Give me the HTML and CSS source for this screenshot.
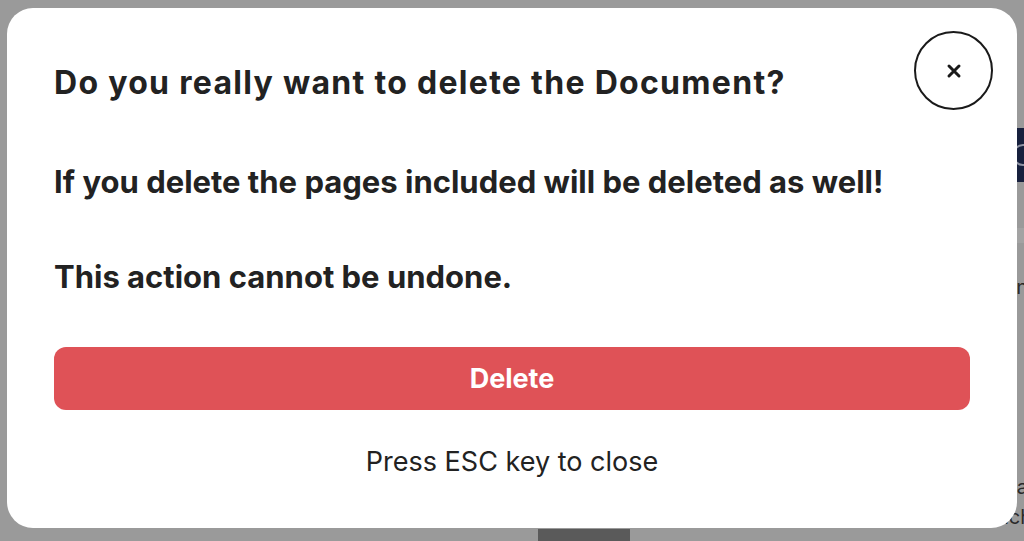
FILE: index.html
```html
<!DOCTYPE html>
<html lang="en">
<head>
    <meta charset="UTF-8">
    <meta name="viewport" content="width=device-width, initial-scale=1.0">
    <title>Delete Document</title>
    <link rel="stylesheet" href="styles.css">
</head>
<body>

    <!-- Page behind the overlay -->
    <div class="page">
        <div class="page-nav"><span class="nav-icon"></span></div>
        <div class="page-band"></div>
        <p class="page-text">n</p>
        <p class="page-text low">a</p>
        <p class="page-text lower">ich</p>
        <div class="page-footer"><span class="footer-block"></span></div>
    </div>

    <!-- Delete confirmation modal -->
    <div class="overlay">
        <div class="modal">
            <button class="close-btn" aria-label="Close">
                <svg width="16" height="16" viewBox="0 0 16 16">
                    <path d="M3 3 L13 13 M13 3 L3 13" stroke="#1a1a1a" stroke-width="3" stroke-linecap="round"/>
                </svg>
            </button>
            <h1>Do you really want to delete the Document?</h1>
            <p class="warning">If you delete the pages included will be deleted as well!</p>
            <p class="warning">This action cannot be undone.</p>
            <button class="delete-btn">Delete</button>
            <p class="hint">Press ESC key to close</p>
        </div>
    </div>

</body>
</html>
```

FILE: styles.css
```css
/* Base styling */
body {
    margin: 0;
    font-family: Inter, "Noto Sans", sans-serif;
    background-color: #9a9a9a;
    color: #222;
    overflow: hidden;
}

/* Page behind the overlay */
.page {
    height: 541px;
    display: flex;
    flex-direction: column;
    align-items: flex-end;
}

.page-nav {
    margin-top: 128px;
    width: 60px;
    height: 54px;
    background-color: #17203d;
    display: flex;
    justify-content: flex-end;
    align-items: center;
}

.nav-icon {
    width: 18px;
    height: 18px;
    border: 2px solid #8f93a3;
    border-radius: 50%;
    margin-right: -10px;
}

.page-band {
    margin-top: 46px;
    width: 60px;
    height: 15px;
    background-color: #a3a3a3;
}

.page-text {
    margin: 32px -4px 0 0;
    font-size: 20px;
    line-height: 24px;
    color: #2a2a2a;
}

.page-text.low {
    margin-top: 176px;
}

.page-text.lower {
    margin-top: 6px;
    margin-right: -8px;
}

.page-footer {
    margin-top: auto;
    width: 100%;
    height: 12px;
    display: flex;
}

.footer-block {
    margin-left: 538px;
    width: 92px;
    background-color: #5a5a5a;
}

/* Modal */
.overlay {
    position: fixed;
    inset: 0;
    padding: 8px 7px 13px 7px;
    display: flex;
}

.modal {
    position: relative;
    flex: 1;
    background-color: #fff;
    border-radius: 26px;
    padding: 55px 47px 0 47px;
    display: flex;
    flex-direction: column;
}

.close-btn {
    position: absolute;
    top: 23px;
    right: 24px;
    width: 79px;
    height: 79px;
    border: 2.5px solid #1a1a1a;
    border-radius: 50%;
    background: #fff;
    display: flex;
    align-items: center;
    justify-content: center;
    padding: 0;
    cursor: pointer;
}

h1 {
    margin: 0;
    font-size: 32px;
    line-height: 40px;
    font-weight: 700;
    letter-spacing: 1.3px;
}

.warning {
    margin: 59px 0 0 0;
    font-size: 31px;
    line-height: 40px;
    font-weight: 700;
}

.warning + .warning {
    margin-top: 55px;
}

.delete-btn {
    margin-top: 50px;
    height: 63px;
    border: none;
    border-radius: 12px;
    background-color: #df5257;
    color: #fff;
    font-family: inherit;
    font-size: 27px;
    font-weight: 700;
    cursor: pointer;
}

.hint {
    margin: 36px 0 0 0;
    text-align: center;
    font-size: 27px;
    line-height: 32px;
}
```
